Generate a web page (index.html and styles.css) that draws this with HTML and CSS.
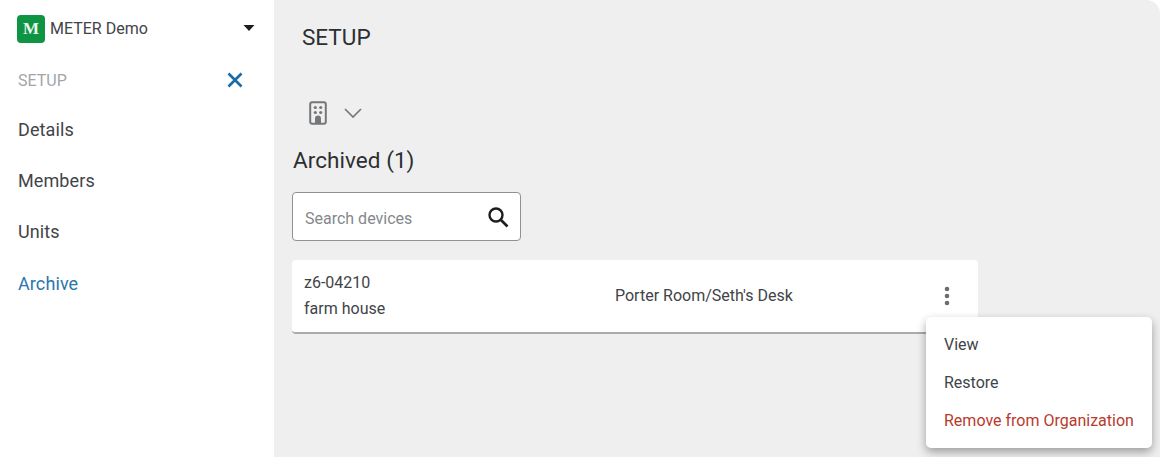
FILE: index.html
```html
<!DOCTYPE html>
<html lang="en">
<head>
    <meta charset="UTF-8">
    <title>Setup - Archive</title>
    <link rel="stylesheet" href="styles.css">
</head>
<body>
    <aside class="sidebar">
        <div class="org">
            <span class="org-logo">M</span>
            <span class="org-name">METER Demo</span>
            <svg class="org-caret" width="12" height="6" viewBox="0 0 12 6"><path d="M0.5 0h11L6 6z" fill="#1d1d1d"/></svg>
        </div>
        <div class="section">
            <span>SETUP</span>
            <svg width="16" height="16" viewBox="0 0 16 16"><path d="M1.5 1.5l13 13M14.5 1.5l-13 13" stroke="#1a6aa5" stroke-width="2.6" fill="none"/></svg>
        </div>
        <nav class="nav">
            <a>Details</a>
            <a>Members</a>
            <a>Units</a>
            <a class="active">Archive</a>
        </nav>
    </aside>

    <main class="content">
        <h1>SETUP</h1>
        <div class="filter">
            <svg width="18" height="24" viewBox="0 0 18 24" fill="none">
                <rect x="1.2" y="1.2" width="15.6" height="21.6" rx="2" stroke="#74787b" stroke-width="2"/>
                <g fill="#74787b">
                    <circle cx="6.3" cy="6.5" r="1.6"/><circle cx="11.7" cy="6.5" r="1.6"/>
                    <circle cx="6.3" cy="11.5" r="1.6"/><circle cx="11.7" cy="11.5" r="1.6"/>
                    <path d="M6 22v-4.5a3 3 0 0 1 6 0V22z"/>
                </g>
            </svg>
            <svg width="18" height="10" viewBox="0 0 18 10" fill="none"><path d="M1 1l8 8 8-8" stroke="#74787b" stroke-width="1.7"/></svg>
        </div>
        <h2>Archived (1)</h2>
        <div class="search">
            <span class="search-text">Search devices</span>
            <svg width="24" height="24" viewBox="0 0 24 24" fill="none"><circle cx="10" cy="10" r="6.5" stroke="#1d1d1d" stroke-width="2.4"/><path d="M15 15l6.5 6.5" stroke="#1d1d1d" stroke-width="2.6"/></svg>
        </div>
        <div class="device">
            <div class="device-id">
                <div>z6-04210</div>
                <div>farm house</div>
            </div>
            <div class="device-loc">Porter Room/Seth's Desk</div>
            <svg class="kebab" width="8" height="20" viewBox="0 0 8 20" fill="#6a6d70"><circle cx="4" cy="3" r="2.3"/><circle cx="4" cy="10" r="2.3"/><circle cx="4" cy="17" r="2.3"/></svg>
        </div>
        <ul class="menu">
            <li>View</li>
            <li>Restore</li>
            <li class="danger">Remove from Organization</li>
        </ul>
    </main>
</body>
</html>
```

FILE: styles.css
```css
* { box-sizing: border-box; }
html, body { height: 100%; }
body { margin: 0; display: flex; height: 457px; overflow: hidden; background: white; font-family: Roboto, "Liberation Sans", sans-serif; color: #3f4448; }

.sidebar { width: 274px; flex: none; padding: 15px 18px 0 17px; }
.org { display: flex; align-items: center; height: 28px; font-size: 16px; }
.org-logo { width: 28px; height: 28px; border-radius: 4px; background: #0f9444; color: #e9f5ec; font-family: "Liberation Serif", serif; font-weight: bold; font-size: 17px; display: flex; align-items: center; justify-content: center; }
.org-name { margin-left: 5px; margin-bottom: 1px; }
.org-caret { margin-left: auto; margin-right: 1px; margin-bottom: 3px; }
.section { display: flex; justify-content: space-between; align-items: center; margin-top: 25px; padding: 0 13px 0 1px; height: 24px; font-size: 16px; color: #a3a5a7; }
.nav { display: flex; flex-direction: column; margin-top: 11.5px; padding-left: 1px; }
.nav a { height: 51.3px; display: flex; align-items: center; font-size: 18px; letter-spacing: 0.1px; }
.nav a.active { color: #2a76ae; }

.content { position: relative; flex: 1; background: #efefef; border-radius: 0 14px 0 0; padding: 0 0 0 18px; }
h1 { margin: 0; padding: 24px 0 0 10px; font-size: 22.5px; line-height: 26px; font-weight: 400; color: #2c2f32; }
.filter { display: flex; align-items: center; gap: 17px; margin-top: 50px; padding-left: 17px; height: 26px; }
h2 { margin: 21px 0 0; padding-left: 1px; font-size: 22.5px; line-height: 26px; font-weight: 400; letter-spacing: 0.05px; color: #2c2f32; }
.search { display: flex; align-items: center; justify-content: space-between; width: 229px; height: 49px; margin-top: 19px; padding: 0 10px 0 12px; background: white; border: 1px solid #8f9295; border-radius: 4px; font-size: 16px; color: #84888c; }
.search-text { padding-top: 4px; }
.device { display: flex; align-items: center; width: 686px; height: 74px; margin-top: 19px; padding: 0 27px 0 12px; background: white; border-radius: 4px; border-bottom: 2px solid #a9abad; font-size: 16px; line-height: 26px; }
.device-id { width: 311px; }
.device-loc { flex: 1; }
.menu { position: absolute; top: 317px; left: 652px; width: 226px; height: 131px; margin: 0; padding: 8px 0; list-style: none; background: white; border-radius: 5px; box-shadow: 0 4px 10px rgba(0, 0, 0, 0.35); font-size: 16px; }
.menu li { height: 38px; padding-left: 18px; display: flex; align-items: center; }
.menu .danger { color: #b83a2e; }
```
